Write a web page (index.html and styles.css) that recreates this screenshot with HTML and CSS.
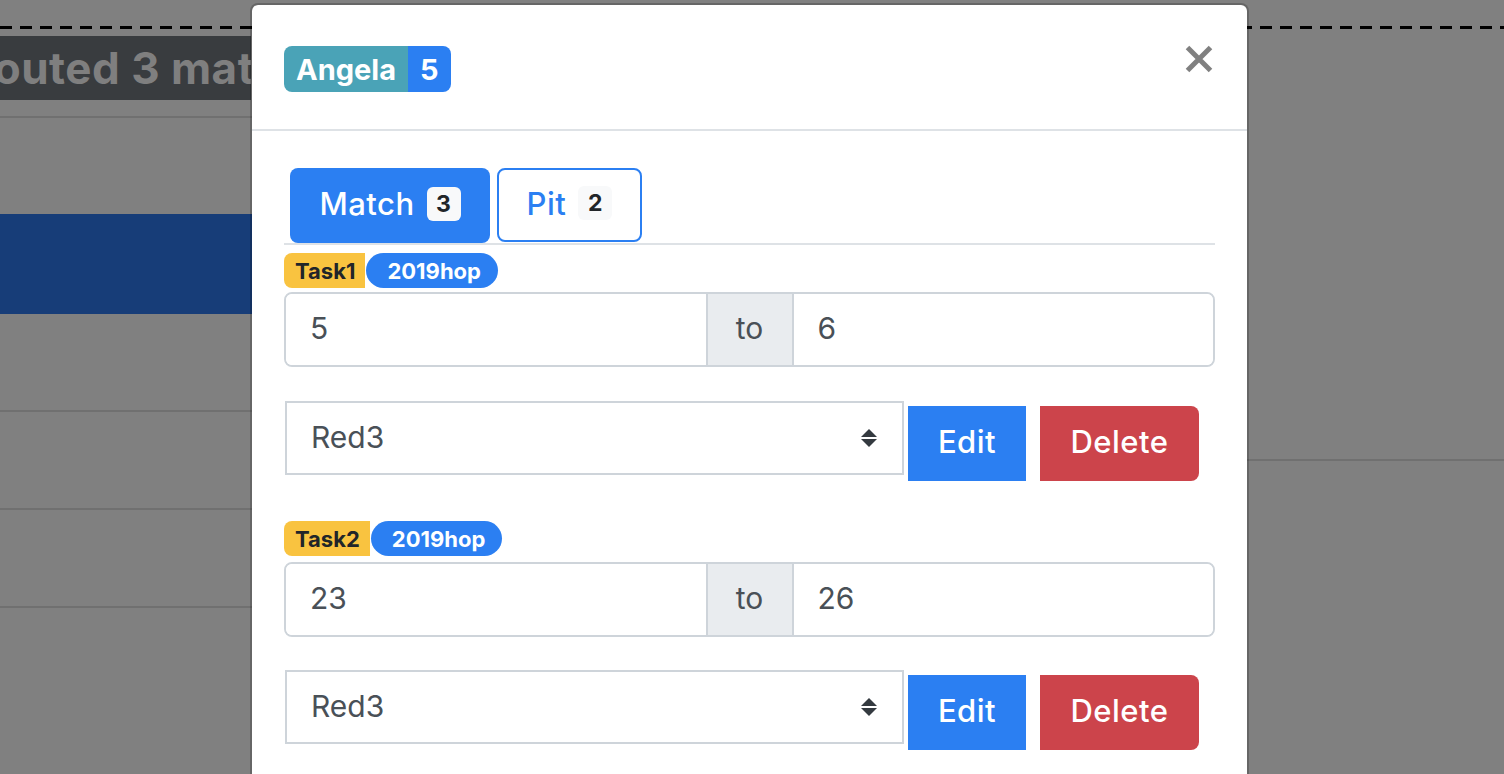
FILE: index.html
```html
<!DOCTYPE html>
<html>
<head>
<meta charset="utf-8">
<link rel="stylesheet" href="styles.css">
</head>
<body>
<div class="page">
  <div class="dash"></div>
  <div class="cols">
    <div class="col-left">
      <div class="scout-bar"><span class="scout-text">Scouted 3 matches</span></div>
      <div class="bg-row r1"></div>
      <div class="bg-row r2"></div>
      <div class="bg-blue"></div>
      <div class="bg-row r3"></div>
      <div class="bg-row r3"></div>
      <div class="bg-row r3"></div>
    </div>
    <div class="col-right">
      <div class="bg-row r4"></div>
    </div>
  </div>
</div>

<div class="modal">
  <div class="modal-header">
    <div class="title">
      <span class="badge badge-info">Angela</span><span class="badge badge-primary">5</span>
    </div>
    <svg class="close" width="28" height="28" viewBox="0 0 28 28"><path d="M2.5 2.5 L25.5 25.5 M25.5 2.5 L2.5 25.5" stroke="#808080" stroke-width="5" fill="none"/></svg>
  </div>
  <div class="modal-body">
    <div class="tabs">
      <div class="tab active">Match <span class="count">3</span></div>
      <div class="tab">Pit <span class="count">2</span></div>
    </div>

    <div class="task">
      <div class="task-badges"><span class="badge badge-warning">Task1</span><span class="badge badge-pill">2019hop</span></div>
      <div class="input-group">
        <div class="field">5</div>
        <div class="addon">to</div>
        <div class="field">6</div>
      </div>
      <div class="action-row">
        <div class="select">Red3
          <svg class="arrows" width="16" height="18" viewBox="0 0 16 18"><path d="M8 0 L16 8 L0 8 Z M0 10 L16 10 L8 18 Z" fill="#343a40"/></svg>
        </div>
        <div class="btn btn-edit">Edit</div>
        <div class="btn btn-delete">Delete</div>
      </div>
    </div>

    <div class="task second">
      <div class="task-badges"><span class="badge badge-warning">Task2</span><span class="badge badge-pill">2019hop</span></div>
      <div class="input-group">
        <div class="field">23</div>
        <div class="addon">to</div>
        <div class="field">26</div>
      </div>
      <div class="action-row">
        <div class="select">Red3
          <svg class="arrows" width="16" height="18" viewBox="0 0 16 18"><path d="M8 0 L16 8 L0 8 Z M0 10 L16 10 L8 18 Z" fill="#343a40"/></svg>
        </div>
        <div class="btn btn-edit">Edit</div>
        <div class="btn btn-delete">Delete</div>
      </div>
    </div>
  </div>
</div>
</body>
</html>
```

FILE: styles.css
```css
html, body {
  margin: 0;
  padding: 0;
  width: 1504px;
  height: 774px;
  overflow: hidden;
  background: #808080;
  font-family: "Inter", "Liberation Sans", sans-serif;
}

.page {
  padding-top: 26px;
}

.dash {
  height: 3px;
  background: repeating-linear-gradient(90deg, #000 0 12px, transparent 12px 20px);
}

.cols {
  display: grid;
  grid-template-columns: 1200px 1fr;
  margin-top: 7px;
}

.scout-bar {
  width: 251px;
  height: 64px;
  background: #393c3f;
  display: flex;
  align-items: center;
  overflow: hidden;
  white-space: nowrap;
}

.scout-text {
  display: block;
  flex: none;
  width: 313px;
  overflow: hidden;
  font-size: 44px;
  font-weight: 700;
  color: #7f7f7f;
  margin-left: -62px;
  letter-spacing: 0.5px;
}

.bg-row {
  border-bottom: 2px solid #707070;
}
.r1 { height: 16px; }
.r2 { height: 96px; border-bottom: none; }
.bg-blue { height: 100px; background: #173d78; }
.r3 { height: 96px; }
.r4 { height: 423px; }

.modal {
  position: absolute;
  left: 250px;
  top: 3px;
  width: 995px;
  height: 800px;
  background: #fff;
  background-clip: padding-box;
  border: 2px solid rgba(0, 0, 0, 0.2);
  border-radius: 8px;
}

.modal-header {
  height: 124px;
  padding: 0 34px 0 32px;
  display: flex;
  align-items: center;
  justify-content: space-between;
  border-bottom: 2px solid #dee2e6;
}

.title {
  display: flex;
  margin-top: 4px;
}

.badge {
  display: inline-flex;
  align-items: center;
  font-weight: 700;
  border-radius: 8px;
  line-height: 1;
}

.badge-info {
  background: #4aa3b7;
  color: #fff;
  font-size: 29px;
  height: 46px;
  padding: 0 12px;
  border-radius: 8px 0 0 8px;
}

.badge-primary {
  background: #2b7ff2;
  color: #fff;
  font-size: 29px;
  height: 46px;
  padding: 0 12px;
  border-radius: 0 8px 8px 0;
}

.close {
  display: block;
  align-self: flex-start;
  margin-top: 40px;
}

.modal-body {
  padding: 37px 32px 0 32px;
}

.tabs {
  display: flex;
  gap: 7px;
  padding-left: 6px;
  border-bottom: 2px solid #dee2e6;
}

.tab {
  height: 75px;
  box-sizing: border-box;
  display: flex;
  align-items: center;
  justify-content: center;
  font-size: 31px;
  font-weight: 500;
  border-radius: 8px;
  letter-spacing: 0.5px;
  padding-bottom: 4px;
}

.tab.active {
  width: 200px;
  background: #2b7ff2;
  color: #fff;
}

.tab:not(.active) {
  width: 145px;
  border: 2px solid #2b7ff2;
  color: #2b7ff2;
  height: 74px;
}

.count {
  display: inline-flex;
  align-items: center;
  justify-content: center;
  width: 34px;
  height: 34px;
  margin-left: 12px;
  background: #f8f9fa;
  color: #212529;
  border-radius: 6px;
  font-size: 23px;
  font-weight: 700;
}

.task {
  margin-top: 8px;
  margin-bottom: 40px;
}

.task-badges {
  display: flex;
  gap: 1px;
  height: 35px;
}

.badge-warning {
  background: #f9c340;
  color: #212529;
  font-size: 22px;
  padding: 0 10px 0 11px;
  border-radius: 8px 0 0 8px;
}

.badge-pill {
  background: #2b7ff2;
  color: #fff;
  font-size: 22px;
  padding: 0 17px 0 21px;
  border-radius: 18px;
}

.input-group {
  margin-top: 4px;
  display: flex;
  height: 75px;
  box-sizing: border-box;
  border: 2px solid #ced4da;
  border-radius: 8px;
  overflow: hidden;
  color: #495057;
  font-size: 30px;
}

.second .input-group {
  margin-top: 6px;
}

.second .action-row {
  margin-top: 33px;
}

.field {
  flex: 1;
  display: flex;
  align-items: center;
  padding-left: 24px;
  padding-bottom: 3px;
  background: #fff;
}

.addon {
  width: 84px;
  display: flex;
  align-items: center;
  justify-content: center;
  padding-bottom: 3px;
  background: #e9ecef;
  border-left: 2px solid #ced4da;
  border-right: 2px solid #ced4da;
}

.action-row {
  margin-top: 34px;
  display: flex;
  align-items: flex-start;
  height: 80px;
}

.select {
  width: 619px;
  height: 74px;
  box-sizing: border-box;
  border: 2px solid #ced4da;
  display: flex;
  align-items: center;
  justify-content: space-between;
  padding: 0 25px 3px 24px;
  font-size: 30px;
  color: #495057;
  margin-left: 1px;
}

.arrows {
  display: block;
  margin-top: 3px;
}

.btn {
  margin-top: 5px;
  height: 75px;
  box-sizing: border-box;
  padding-bottom: 4px;
  display: flex;
  align-items: center;
  justify-content: center;
  color: #fff;
  font-size: 31px;
  font-weight: 500;
  letter-spacing: 0.5px;
}

.btn-edit {
  width: 118px;
  margin-left: 4px;
  background: #2b7ff2;
}

.btn-delete {
  width: 159px;
  margin-left: 14px;
  background: #cc444b;
  border-radius: 0 8px 8px 0;
}
```
